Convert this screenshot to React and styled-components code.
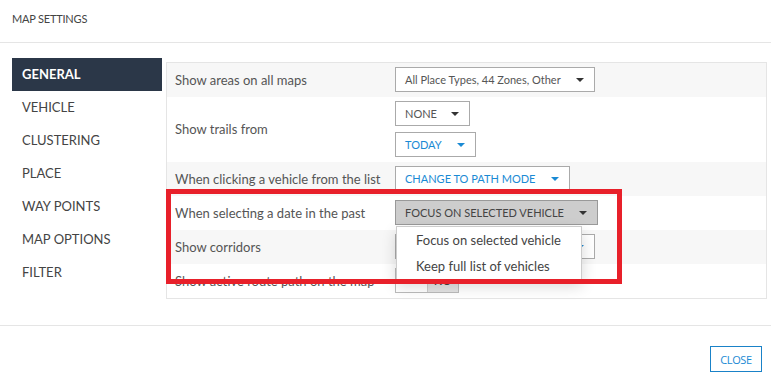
import styled, { createGlobalStyle } from "styled-components";

const GlobalStyle = createGlobalStyle`
  body {
    margin: 0;
    background: #fff;
  }
  * {
    box-sizing: border-box;
  }
`;

const Dialog = styled.div`
  position: relative;
  width: 771px;
  height: 379px;
  background: #fff;
  font-family: Lato, "Open Sans", sans-serif;
  overflow: hidden;
`;

const Header = styled.div`
  height: 43px;
  padding: 12px 12px 0;
  border-bottom: 1px solid #e5e5e5;
  font-size: 11px;
  color: #444;
  letter-spacing: -0.2px;
`;

const Body = styled.div`
  display: flex;
  gap: 4px;
  padding: 15px 4px 0 12px;
`;

const Nav = styled.ul`
  width: 150px;
  margin: 0;
  padding: 0;
  list-style: none;
`;

const NavItem = styled.li`
  height: 33px;
  display: flex;
  align-items: center;
  padding: 0 0 1px 10px;
  font-size: 13px;
  color: ${(p) => (p.$active ? "#fff" : "#444")};
  font-weight: ${(p) => (p.$active ? 700 : 400)};
  background: ${(p) => (p.$active ? "#2b3748" : "transparent")};
`;

const Panel = styled.div`
  flex: 1;
  margin-top: 4px;
  border: 1px solid #e5e5e5;
`;

const Row = styled.div`
  display: grid;
  grid-template-columns: 228px 1fr;
  align-items: center;
  padding: 4px 0 5px;
  background: ${(p) => (p.$shade ? "#f7f7f7" : "#fff")};
`;

const Label = styled.div`
  padding-left: 8px;
  font-size: 13px;
  color: #555;
  white-space: nowrap;
`;

const Controls = styled.div`
  display: flex;
  flex-direction: column;
  align-items: flex-start;
  gap: 6px;
`;

const SelectWrap = styled.div`
  position: relative;
`;

const Select = styled.div`
  display: inline-flex;
  align-items: center;
  justify-content: flex-end;
  gap: ${(p) => p.$gap || 15}px;
  width: ${(p) => (p.$width ? `${p.$width}px` : "auto")};
  height: 25px;
  padding: 0 10px 0 9px;
  border: 1px solid ${(p) => (p.$filled ? "#999" : "#aaa")};
  background: ${(p) => (p.$filled ? "#cdcdcd" : "#fff")};
  color: ${(p) => (p.$blue ? "#1a8ad4" : p.$filled ? "#444" : "#555")};
  font-size: 11px;
  white-space: nowrap;
`;

const Caret = styled.span`
  width: 0;
  height: 0;
  border-left: 4px solid transparent;
  border-right: 4px solid transparent;
  border-top: 4px solid ${(p) => (p.$blue ? "#1a8ad4" : "#333")};
`;

const Menu = styled.ul`
  position: absolute;
  top: 26px;
  left: 1px;
  z-index: 2;
  width: 186px;
  margin: 0;
  padding: 0;
  list-style: none;
  background: #fff;
  border: 1px solid #ccc;
  box-shadow: 0 6px 14px rgba(0, 0, 0, 0.16);
`;

const MenuItem = styled.li`
  height: 26px;
  line-height: 26px;
  padding-left: 19px;
  font-size: 13px;
  color: #444;
  white-space: nowrap;
`;

const Toggle = styled.div`
  display: flex;
  width: 64px;
  height: 25px;
  border: 1px solid #bbb;
`;

const ToggleHalf = styled.div`
  flex: 1;
  display: flex;
  align-items: center;
  justify-content: center;
  font-size: 11px;
  font-weight: 700;
  color: #444;
  background: ${(p) => (p.$on ? "#e3e3e3" : "#fff")};
  border-left: ${(p) => (p.$on ? "1px solid #ccc" : "none")};
`;

const Footer = styled.div`
  display: flex;
  justify-content: flex-end;
  margin-top: 26px;
  padding: 20px 9px 0;
  border-top: 1px solid #e5e5e5;
`;

const CloseButton = styled.button`
  width: 52px;
  height: 26px;
  padding: 0;
  border: 1px solid #1a82c8;
  background: #fff;
  color: #1a8ad4;
  font-family: "Open Sans", Lato, sans-serif;
  font-size: 11px;
  letter-spacing: -0.4px;
`;

const Highlight = styled.div`
  position: absolute;
  left: 166px;
  top: 189px;
  width: 456px;
  height: 95px;
  border: 5px solid #e8202a;
  z-index: 3;
  pointer-events: none;
`;

const navItems = [
  "GENERAL",
  "VEHICLE",
  "CLUSTERING",
  "PLACE",
  "WAY POINTS",
  "MAP OPTIONS",
  "FILTER",
];

function App() {
  return (
    <>
      <GlobalStyle />
      <Dialog>
        <Header>MAP SETTINGS</Header>
        <Body>
          <Nav>
            {navItems.map((item, i) => (
              <NavItem key={item} $active={i === 0}>
                {item}
              </NavItem>
            ))}
          </Nav>
          <Panel>
            <Row $shade>
              <Label>Show areas on all maps</Label>
              <Controls>
                <Select>
                  All Place Types, 44 Zones, Other
                  <Caret />
                </Select>
              </Controls>
            </Row>
            <Row>
              <Label>Show trails from</Label>
              <Controls>
                <Select $gap={14}>
                  NONE
                  <Caret />
                </Select>
                <Select $blue>
                  TODAY
                  <Caret $blue />
                </Select>
              </Controls>
            </Row>
            <Row $shade>
              <Label>When clicking a vehicle from the list</Label>
              <Controls>
                <Select $blue $gap={16}>
                  CHANGE TO PATH MODE
                  <Caret $blue />
                </Select>
              </Controls>
            </Row>
            <Row>
              <Label>When selecting a date in the past</Label>
              <Controls>
                <SelectWrap>
                  <Select $filled>
                    FOCUS ON SELECTED VEHICLE
                    <Caret />
                  </Select>
                  <Menu>
                    <MenuItem>Focus on selected vehicle</MenuItem>
                    <MenuItem>Keep full list of vehicles</MenuItem>
                  </Menu>
                </SelectWrap>
              </Controls>
            </Row>
            <Row $shade>
              <Label>Show corridors</Label>
              <Controls>
                <Select $blue $width={200}>
                  <Caret $blue />
                </Select>
              </Controls>
            </Row>
            <Row>
              <Label>Show active route path on the map</Label>
              <Controls>
                <Toggle>
                  <ToggleHalf />
                  <ToggleHalf $on>NO</ToggleHalf>
                </Toggle>
              </Controls>
            </Row>
          </Panel>
        </Body>
        <Footer>
          <CloseButton>CLOSE</CloseButton>
        </Footer>
        <Highlight />
      </Dialog>
    </>
  );
}

export default App;
